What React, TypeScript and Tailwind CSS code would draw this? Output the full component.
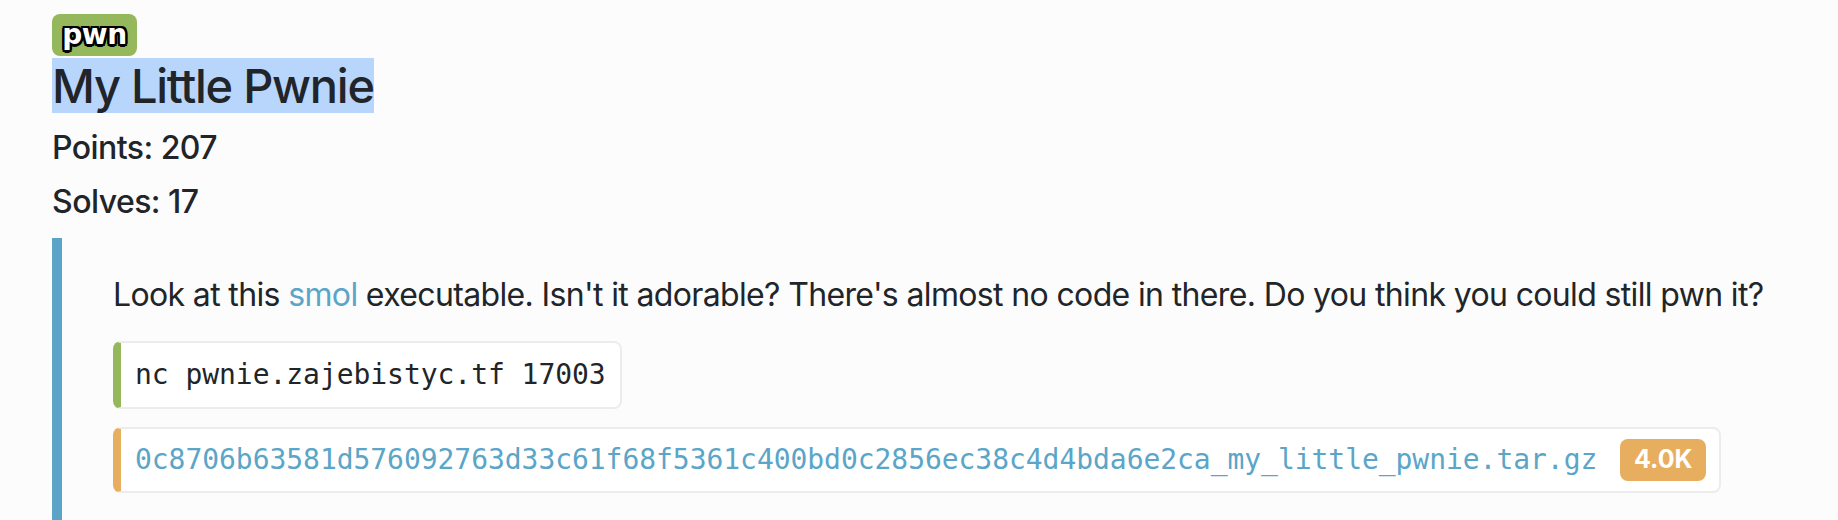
export default function App() {
  const sans = "font-['Inter','Noto_Sans',sans-serif]";
  return (
    <div className={`min-h-[520px] w-full bg-[#fcfcfc] pl-[52px] pt-[14px] text-[#212529] ${sans}`}>
      <div className="flex h-[42px] w-[85px] items-center justify-center rounded-[8px] bg-[#94b85b]">
        <span className="font-['DejaVu_Sans',sans-serif] text-[28px] font-bold leading-none tracking-[-0.5px] text-white [text-shadow:2.5px_0_0_#000,-2.5px_0_0_#000,0_2.5px_0_#000,0_-2.5px_0_#000,2px_2px_0_#000,-2px_-2px_0_#000,2px_-2px_0_#000,-2px_2px_0_#000]">
          pwn
        </span>
      </div>
      <div className="mt-[2px]">
        <span className="inline-block bg-[#b8d6fb] text-[47px] font-medium leading-[55px] tracking-[-0.027em]">My Little Pwnie</span>
      </div>
      <div className="mt-[8px] text-[32px] font-medium leading-[54px] tracking-[-0.017em]">Points: 207</div>
      <div className="text-[32px] font-medium leading-[54px] tracking-[-0.017em]">Solves: 17</div>
      <div className="mt-[9px] border-l-[10px] border-[#5ba4c7] pb-[30px] pl-[51px] pt-[33px]">
        <p className="whitespace-nowrap text-[32px] leading-[48px] tracking-[-0.02em]">
          Look at this <a className="text-[#5aa5c8]">smol</a> executable. Isn't it adorable? There's almost no code in there. Do you think you could still pwn it?
        </p>
        <div className="mt-[22px] flex flex-col items-start gap-[18px] font-['DejaVu_Sans_Mono',monospace] text-[28px] tracking-[-0.05px]">
          <div className="flex h-[68px] items-center rounded-[8px] border-2 border-l-[8px] border-[#ececec] border-l-[#94b85b] bg-white pl-[14px] pr-[14px]">
            nc pwnie.zajebistyc.tf 17003
          </div>
          <div className="flex h-[66px] items-center rounded-[8px] border-2 border-l-[8px] border-[#ececec] border-l-[#e8ae5f] bg-white pl-[14px] pr-[13px]">
            <a className="text-[#5aa5c8]">0c8706b63581d576092763d33c61f68f5361c400bd0c2856ec38c4d4bda6e2ca_my_little_pwnie.tar.gz</a>
            <span className={`ml-[23px] flex h-[42px] w-[86px] items-center justify-center rounded-[8px] bg-[#e8ae5f] text-[25px] font-bold tracking-normal text-white ${sans}`}>
              4.0K
            </span>
          </div>
        </div>
      </div>
    </div>
  );
}
